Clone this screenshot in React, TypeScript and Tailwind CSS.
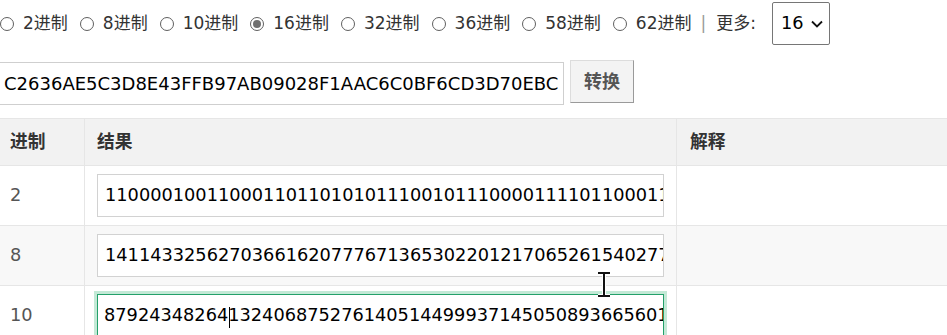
import { useMemo } from "react";

const HEX = "C2636AE5C3D8E43FFB97AB09028F1AAC6C0BF6CD3D70EBC";
const DEC = "87924348264132406875276140514499937145050893665601847263519";

const BASES = ["2", "8", "10", "16", "32", "36", "58", "62"];

function Radio({ label, checked }: { label: string; checked?: boolean }) {
    return (
        <label className="flex shrink-0 items-center mr-[12px]">
            <span className="flex h-[14px] w-[14px] shrink-0 items-center justify-center rounded-full border-[1.5px] border-[#5f5f5f] bg-white">
                {checked && <span className="h-[8px] w-[8px] rounded-full bg-[#6f6f6f]" />}
            </span>
            <span className="ml-[9px] whitespace-nowrap text-[#333]">{label}进制</span>
        </label>
    );
}

function ResultInput({ value, focused }: { value: string; focused?: boolean }) {
    return (
        <div
            className={
                focused
                    ? "h-[43px] w-[567px] overflow-hidden border border-[#23a06a] shadow-[0_0_0_3px_#c3e9d6] bg-white flex items-center pl-[6px]"
                    : "h-[43px] w-[567px] overflow-hidden border border-[#d2d2d2] bg-white flex items-center pl-[7px]"
            }
        >
            <span className="whitespace-nowrap text-black">{value}</span>
        </div>
    );
}

export default function App() {
    const { bin, oct } = useMemo(() => {
        const n = BigInt("0x" + HEX + "7A");
        return { bin: n.toString(2), oct: n.toString(8) };
    }, []);

    return (
        <div
            className="relative h-[335px] w-[947px] overflow-hidden bg-white text-[17.75px] text-[#333]"
            style={{ fontFamily: '"DejaVu Sans", Verdana, "Noto Sans CJK SC", sans-serif' }}
        >
            {/* Base selector */}
            <div className="flex h-[47px] items-center text-[17px]">
                {BASES.map((b) => (
                    <Radio key={b} label={b} checked={b === "16"} />
                ))}
                <span className="-ml-[3px] text-[#999]">|</span>
                <span className="ml-[10px] text-[#333]">更多:</span>
                <div className="ml-[16px] flex h-[43px] w-[58px] shrink-0 items-center border border-[#767676] rounded-[2px] pl-[8px] text-black text-[17.75px]">
                    <span>16</span>
                    <svg className="ml-[7px]" width="12" height="8" viewBox="0 0 12 8">
                        <path d="M1 1.5 6 6.5 11 1.5" fill="none" stroke="#111" strokeWidth="1.8" />
                    </svg>
                </div>
            </div>

            {/* Input + convert */}
            <div className="mt-[13px] flex items-start">
                <div className="mt-[2px] -ml-[10px] flex h-[43px] w-[574px] items-center overflow-hidden border border-[#cfcfcf] pl-[13px]">
                    <span className="whitespace-nowrap text-black text-[18px]">{HEX}</span>
                </div>
                <button className="ml-[6px] h-[43px] w-[64px] border border-[#dcdcdc] border-r-[#9a9a9a] border-b-[#9a9a9a] bg-[#f3f3f3] text-[18px] font-bold text-[#555]">
                    转换
                </button>
            </div>

            {/* Result table */}
            <div className="mt-[13px] border-t border-[#e6e6e6] w-[960px]">
                <div className="flex h-[47px] border-b border-[#e6e6e6] bg-[#f2f2f2] font-bold text-[#333]">
                    <div className="flex w-[85px] items-center border-r border-[#e6e6e6] pl-[10px]">进制</div>
                    <div className="flex w-[592px] items-center border-r border-[#e6e6e6] pl-[12px]">结果</div>
                    <div className="flex flex-1 items-center pl-[13px]">解释</div>
                </div>

                <div className="flex h-[60px] border-b border-[#e6e6e6]">
                    <div className="flex w-[85px] items-center border-r border-[#e6e6e6] pl-[10px] text-[#555]">2</div>
                    <div className="flex w-[592px] items-center border-r border-[#e6e6e6] pl-[12px]">
                        <ResultInput value={bin} />
                    </div>
                    <div className="flex-1" />
                </div>

                <div className="flex h-[60px] border-b border-[#e6e6e6] bg-[#f8f8f8]">
                    <div className="flex w-[85px] items-center border-r border-[#e6e6e6] pl-[10px] text-[#555]">8</div>
                    <div className="flex w-[592px] items-center border-r border-[#e6e6e6] pl-[12px]">
                        <ResultInput value={oct} />
                    </div>
                    <div className="flex-1" />
                </div>

                <div className="flex h-[60px] border-b border-[#e6e6e6]">
                    <div className="flex w-[85px] items-center border-r border-[#e6e6e6] pl-[10px] text-[#555]">10</div>
                    <div className="relative flex w-[592px] items-center border-r border-[#e6e6e6] pl-[12px]">
                        <ResultInput value={DEC} focused />
                        {/* text caret */}
                        <span className="absolute left-[144px] top-[21px] h-[21px] w-px bg-black" />
                    </div>
                    <div className="flex-1" />
                </div>
            </div>

            {/* mouse I-beam cursor */}
            <svg className="absolute left-[596px] top-[271px]" width="16" height="27" viewBox="0 0 16 27">
                <path d="M2 2H14M8 2V25M2 25H14" fill="none" stroke="#fff" strokeWidth="4" />
                <path d="M2 2H14M8 2V25M2 25H14" fill="none" stroke="#111" strokeWidth="2" />
            </svg>
        </div>
    );
}
